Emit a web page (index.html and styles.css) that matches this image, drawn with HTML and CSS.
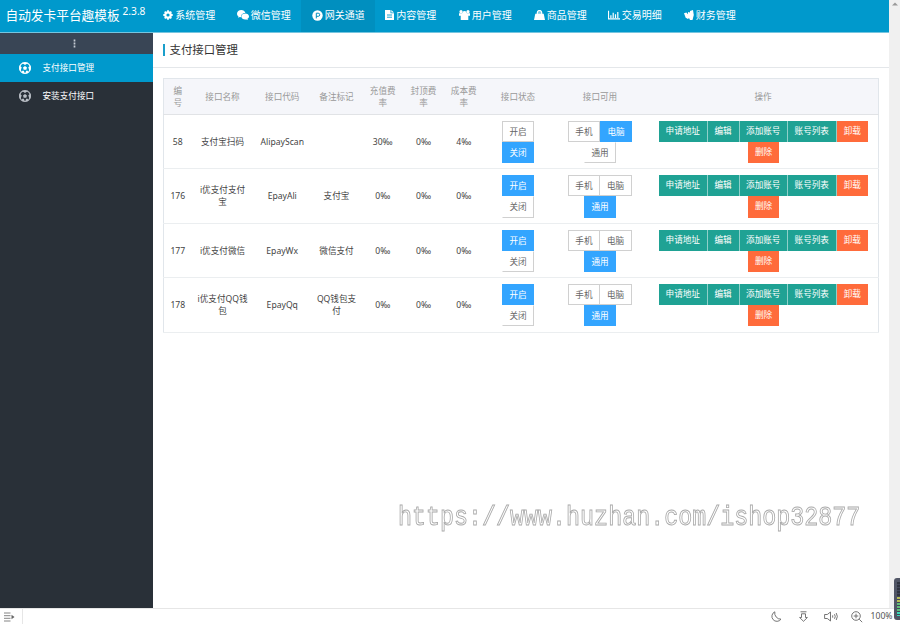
FILE: index.html
```
<!DOCTYPE html>
<html lang="zh-CN">
<head>
<meta charset="utf-8">
<title>支付接口管理</title>
<link rel="stylesheet" href="styles.css">
</head>
<body>
<div class="window">
  <div class="viewport">
    <div class="app">
      <header class="topbar">
        <div class="brand">自动发卡平台趣模板 <sup>2.3.8</sup></div>
        <nav class="nav">
          <a><svg width="10" height="10" viewBox="0 0 10 10"><circle cx="5" cy="5" r="2.7" fill="none" stroke="#fff" stroke-width="2.2"/><path d="M5 .3v2M5 7.7v2M.3 5h2M7.7 5h2M1.7 1.7l1.2 1.2M7.1 7.1l1.2 1.2M1.7 8.3l1.2-1.2M7.1 2.9l1.2-1.2" stroke="#fff" stroke-width="1.8"/></svg>系统管理</a>
          <a><svg width="12" height="10" viewBox="0 0 12 10"><path d="M4.300 0C1.900 0 0 1.600 0 3.700c0 1.100.6 2 1.500 2.700l-.4 1.400 1.700-.8 1.500.2C3.700 4.900 5.500 3.100 8.400 3.100 7.900 1.300 6.300 0 4.300 0z" fill="#fff"/><path d="M8.200 3.600c-2.100 0-3.800 1.300-3.800 3s1.700 3 3.800 3l1.200-.2 1.400.6-.3-1.200c.9-.5 1.500-1.300 1.500-2.200 0-1.700-1.700-3-3.800-3z" fill="#fff"/></svg>微信管理</a>
          <a class="active"><svg width="11" height="11" viewBox="0 0 11 11"><circle cx="5.500" cy="5.500" r="5.200" fill="#fff"/><path d="M4.300 8.400V3.200h1.900a1.500 1.500 0 0 1 0 3.100H4.300" fill="none" stroke="#008fbf" stroke-width="1"/></svg>网关通道</a>
          <a><svg width="9" height="10" viewBox="0 0 9 10"><path d="M0 0h5.500v3.300H9V10H0z" fill="#fff"/><path d="M6.300 0 9 2.600H6.300z" fill="#fff"/><path d="M2 5h5M2 7.200h5" stroke="#0099cc" stroke-width=".9"/></svg>内容管理</a>
          <a><svg width="11" height="10" viewBox="0 0 11 10"><circle cx="2" cy="1.700" r="1.600" fill="#fff"/><circle cx="9" cy="1.700" r="1.600" fill="#fff"/><circle cx="5.500" cy="3.300" r="2.300" fill="#fff"/><path d="M0 3.200h11v2.600H9.300V10H1.700V5.800H0z" fill="#fff"/></svg>用户管理</a>
          <a><svg width="11" height="10" viewBox="0 0 11 10"><path d="M1.300 3.700h8.400L11 10H0z" fill="#fff"/><path d="M3.300 5V2.700a2.200 2.200 0 0 1 4.400 0V5" fill="#fff" fill-opacity=".5" stroke="#fff" stroke-width="1.200"/></svg>商品管理</a>
          <a><svg width="12" height="10" viewBox="0 0 12 10"><path d="M.5.800v8.100H12M2.900 8V5.300M5.200 8V2.800M7.500 8V4.200M9.800 8V2" fill="none" stroke="#fff" stroke-width="1.200"/></svg>交易明细</a>
          <a><svg width="10" height="10" viewBox="0 0 10 10"><path d="M0 3.300 2.400 2.500 4 4.200V2l2 .6V1l3-1 .8 5L8.500 10H6L5 8 4 9 1.700 7.700z" fill="#fff"/></svg>财务管理</a>
        </nav>
      </header>
      <div class="body">
        <aside class="sidebar">
          <div class="fold"><svg width="3" height="9" viewBox="0 0 3 9"><path d="M1.500.5v2M1.500 3.500v2M1.500 6.500v2" stroke="#c5cbd3" stroke-width="1.700"/></svg></div>
          <a class="side active"><svg width="12" height="12" viewBox="0 0 12 12"><use href="#ball"/></svg>支付接口管理</a>
          <a class="side"><svg width="12" height="12" viewBox="0 0 12 12"><g id="ball"><circle cx="6" cy="6" r="5.400" fill="none" stroke="currentColor" stroke-width="1.200"/><path d="M6 4 8 5.500 7.300 7.800H4.700L4 5.500zM2.800.8h6.400L6 3zM.3 3.500 2.700 5.200 1.700 8.600.5 8.400zM11.700 3.500 9.300 5.200l1 3.400 1.200-.2zM2.600 11l.6-2.300 1.800.1.500 2.700zM9.400 11l-.6-2.300-1.800.1-.5 2.700z" fill="currentColor"/></g></svg>安装支付接口</a>
        </aside>
        <main class="main">
          <h1 class="title"><span>支付接口管理</span></h1>
          <table class="grid">
            <colgroup><col class="c-id"><col class="c-name"><col class="c-code"><col class="c-note"><col class="c-fee"><col class="c-top"><col class="c-cost"><col class="c-state"><col class="c-use"><col class="c-ops"></colgroup>
            <thead>
              <tr><th>编<br>号</th><th>接口名称</th><th>接口代码</th><th>备注标记</th><th>充值费<br>率</th><th>封顶费<br>率</th><th>成本费<br>率</th><th>接口状态</th><th>接口可用</th><th>操作</th></tr>
            </thead>
            <tbody>
              <tr><td>58</td><td>支付宝扫码</td><td>AlipayScan</td><td></td><td>30‰</td><td>0‰</td><td>4‰</td>
                <td><div class="stack"><b class="btn">开启</b><b class="btn on">关闭</b></div></td>
                <td><div class="use"><b class="btn">手机</b><b class="btn on">电脑</b></div><div class="use"><b class="btn open">通用</b></div></td>
                <td><div class="ops"><b class="act wide">申请地址</b><b class="act">编辑</b><b class="act wide">添加账号</b><b class="act wide">账号列表</b><b class="act warn">卸载</b></div><div class="ops"><b class="act warn">删除</b></div></td></tr>
              <tr><td>176</td><td>i优支付支付<br>宝</td><td>EpayAli</td><td>支付宝</td><td>0‰</td><td>0‰</td><td>0‰</td>
                <td><div class="stack"><b class="btn on">开启</b><b class="btn open">关闭</b></div></td>
                <td><div class="use"><b class="btn">手机</b><b class="btn next">电脑</b></div><div class="use"><b class="btn on">通用</b></div></td>
                <td><div class="ops"><b class="act wide">申请地址</b><b class="act">编辑</b><b class="act wide">添加账号</b><b class="act wide">账号列表</b><b class="act warn">卸载</b></div><div class="ops"><b class="act warn">删除</b></div></td></tr>
              <tr><td>177</td><td>i优支付微信</td><td>EpayWx</td><td>微信支付</td><td>0‰</td><td>0‰</td><td>0‰</td>
                <td><div class="stack"><b class="btn on">开启</b><b class="btn open">关闭</b></div></td>
                <td><div class="use"><b class="btn">手机</b><b class="btn next">电脑</b></div><div class="use"><b class="btn on">通用</b></div></td>
                <td><div class="ops"><b class="act wide">申请地址</b><b class="act">编辑</b><b class="act wide">添加账号</b><b class="act wide">账号列表</b><b class="act warn">卸载</b></div><div class="ops"><b class="act warn">删除</b></div></td></tr>
              <tr><td>178</td><td>i优支付QQ钱<br>包</td><td>EpayQq</td><td>QQ钱包支<br>付</td><td>0‰</td><td>0‰</td><td>0‰</td>
                <td><div class="stack"><b class="btn on">开启</b><b class="btn open">关闭</b></div></td>
                <td><div class="use"><b class="btn">手机</b><b class="btn next">电脑</b></div><div class="use"><b class="btn on">通用</b></div></td>
                <td><div class="ops"><b class="act wide">申请地址</b><b class="act">编辑</b><b class="act wide">添加账号</b><b class="act wide">账号列表</b><b class="act warn">卸载</b></div><div class="ops"><b class="act warn">删除</b></div></td></tr>
            </tbody>
          </table>
        </main>
      </div>
    </div>
    <div class="scrollbar"><svg width="6" height="4" viewBox="0 0 6 4"><path d="M0 3.500 3 .5l3 3z" fill="#999"/></svg></div>
  </div>
  <footer class="status">
    <div class="panel"><svg width="11" height="10" viewBox="0 0 11 10"><path d="M0 1h6.500M0 3.700h6.500M0 6.300h6.500M0 9h6.500" stroke="#777" stroke-width=".9"/><path d="M7.500 2.700 10.500 5l-3 2.300z" fill="#666"/></svg></div>
    <div class="tools">
      <svg width="11" height="11" viewBox="0 0 11 11"><path d="M3.800.8A5 5 0 1 0 10 8.200 6.200 6.200 0 0 1 3.800.8z"/></svg>
      <svg width="9" height="11" viewBox="0 0 9 11"><path d="M1.500.8h6M2.500 2.800h4v3.700h1.900L4.500 10.300.6 6.500h1.900z"/></svg>
      <svg width="14" height="11" viewBox="0 0 14 11"><path d="M.6 3.500h2.700L6.500 1v9L3.300 7.500H.6zM8.700 4.300v2.400M10.500 3.200q1.500 2.300 0 4.600M12.200 2q2.300 3.500 0 7"/></svg>
      <svg width="12" height="12" viewBox="0 0 12 12"><circle cx="5" cy="5" r="4.300"/><path d="M8.200 8.200l3 3M2.700 5h4.600M5 2.700v4.600"/></svg>
      <span>100%</span>
    </div>
  </footer>
  <div class="watermark">https://www.huzhan.com/ishop32877</div>
  <div class="meter"><i></i></div>
</div>
</body>
</html>
```
FILE: styles.css
```
* { box-sizing: border-box; }
body {
  margin: 0;
  background: #fff;
  color: #444;
  font: 8.6px/12px "Noto Sans", "Noto Sans CJK SC", sans-serif;
}
svg { flex: none; display: block; }
.window { position: relative; width: 900px; height: 624px; display: flex; flex-direction: column; overflow: hidden; }
.viewport { height: 608px; display: flex; }
.app { flex: 1; display: flex; flex-direction: column; }
.scrollbar { width: 10.600px; background: #f0f0f0; padding: 2px 0 0 3px; }

.topbar { height: 33px; display: flex; background: #0099cc; border-bottom: 1px solid #76c5df; color: #fff; }
.brand { width: 152.500px; padding-left: 5.500px; font-size: 12.700px; line-height: 30px; white-space: nowrap; }
.brand sup { font-size: 10.200px; line-height: 0; vertical-align: 5px; margin-left: -.5px; }
.nav { display: grid; grid-template-columns: 73.500px 75px 73.500px 73.500px 75px 74px 76px 74px; font-size: 10px; }
.nav a { display: flex; align-items: center; gap: 2.200px; padding: 0 0 2px 10.500px; white-space: nowrap; }
.nav .active { background: #008fbf; }

.body { flex: 1; display: flex; }
.sidebar { width: 152.500px; background: #293038; color: #fff; }
.fold { height: 21px; background: #394555; display: flex; align-items: center; justify-content: center; padding-right: 3px; }
.side { height: 28.300px; display: flex; align-items: center; gap: 11.500px; padding-left: 19px; }
.side svg { color: #b8bdc4; }
.side.active { background: #0099cc; }
.side.active svg { color: #fff; }

.main { flex: 1; }
.title { margin: 0; height: 35px; display: flex; align-items: center; padding-left: 10.500px; border-bottom: 1px solid #e4e7ea; font-size: 11.400px; font-weight: 400; color: #333; }
.title span { border-left: 2px solid #1a9fcb; padding-left: 4.500px; line-height: 12px; }

.grid { width: 715.500px; margin: 10px 0 0 10.500px; table-layout: fixed; border-collapse: collapse; border: 1px solid #e1e6eb; }
.grid th { height: 36px; padding: 0; font-weight: 400; color: #999; background: #f5f6fa; border-bottom: 1px solid #e1e3e6; }
.grid td { height: 54.400px; padding: .6px 0 0; text-align: center; border-bottom: 1px solid #ebeef0; }
.c-id { width: 28px; } .c-name { width: 62px; } .c-code { width: 57.500px; } .c-note { width: 51px; }
.c-fee { width: 41.500px; } .c-top { width: 40px; } .c-cost { width: 40.500px; }
.c-state { width: 68px; } .c-use { width: 96px; } .c-ops { width: 230.500px; }

.stack { display: flex; flex-direction: column; align-items: center; }
.use, .ops { display: flex; justify-content: center; }
.ops { padding-left: 1px; }
.btn, .act { height: 21.200px; line-height: 20px; font-weight: 400; white-space: nowrap; }
.act { line-height: 21.500px; }
.btn { width: 32.200px; border: 1px solid #d0d0d0; color: #666; background: #fff; }
.btn.open { border-color: transparent #d0d0d0 #d0d0d0 transparent; }
.btn.next { border-left: 0; }
.btn.on { background: #33a5ff; border-color: #33a5ff; color: #fff; }
.act { width: 32px; background: #1fa294; color: #fff; border-right: 1px solid #8fd0c9; }
.act.wide { width: 48.500px; }
.act.warn { width: 31.500px; background: #ff6b3b; border-right: 0; }

.status { height: 16px; display: flex; justify-content: space-between; border-top: 1px solid #e6e6e6; background: #fff; color: #555; }
.panel { width: 22.500px; padding: 3px 0 0 4px; border-right: 1px solid #e6e6e6; }
.tools { display: flex; align-items: center; padding-right: 7.500px; }
.tools span { line-height: 13px; padding-bottom: 1px; }
.tools svg { fill: none; stroke: #666; stroke-width: .9; }
.tools svg:nth-child(1) { margin-right: 17px; }
.tools svg:nth-child(2) { margin-right: 16px; }
.tools svg:nth-child(3) { margin-right: 13px; }
.tools svg:nth-child(4) { margin-right: 8px; }

.watermark { position: absolute; left: 397.500px; top: 502px; font: 23.350px/32px "Liberation Mono", monospace; color: #fff; -webkit-text-stroke: .8px #aaa; white-space: nowrap; transform: scaleY(1.150); will-change: transform; }
.meter { position: absolute; right: 0; top: 578px; width: 6px; height: 42px; background: #515666; border-radius: 3px 0 0 3px; padding: 4px 0 4px 3px; }
.meter i { display: block; height: 100%; background: repeating-linear-gradient(transparent 0 2px, #42475a 2px 3px), linear-gradient(#303440 0 45%, #b6bd55 45% 60%, #61bd79 60% 85%, #39d9bd 85%); }
```
